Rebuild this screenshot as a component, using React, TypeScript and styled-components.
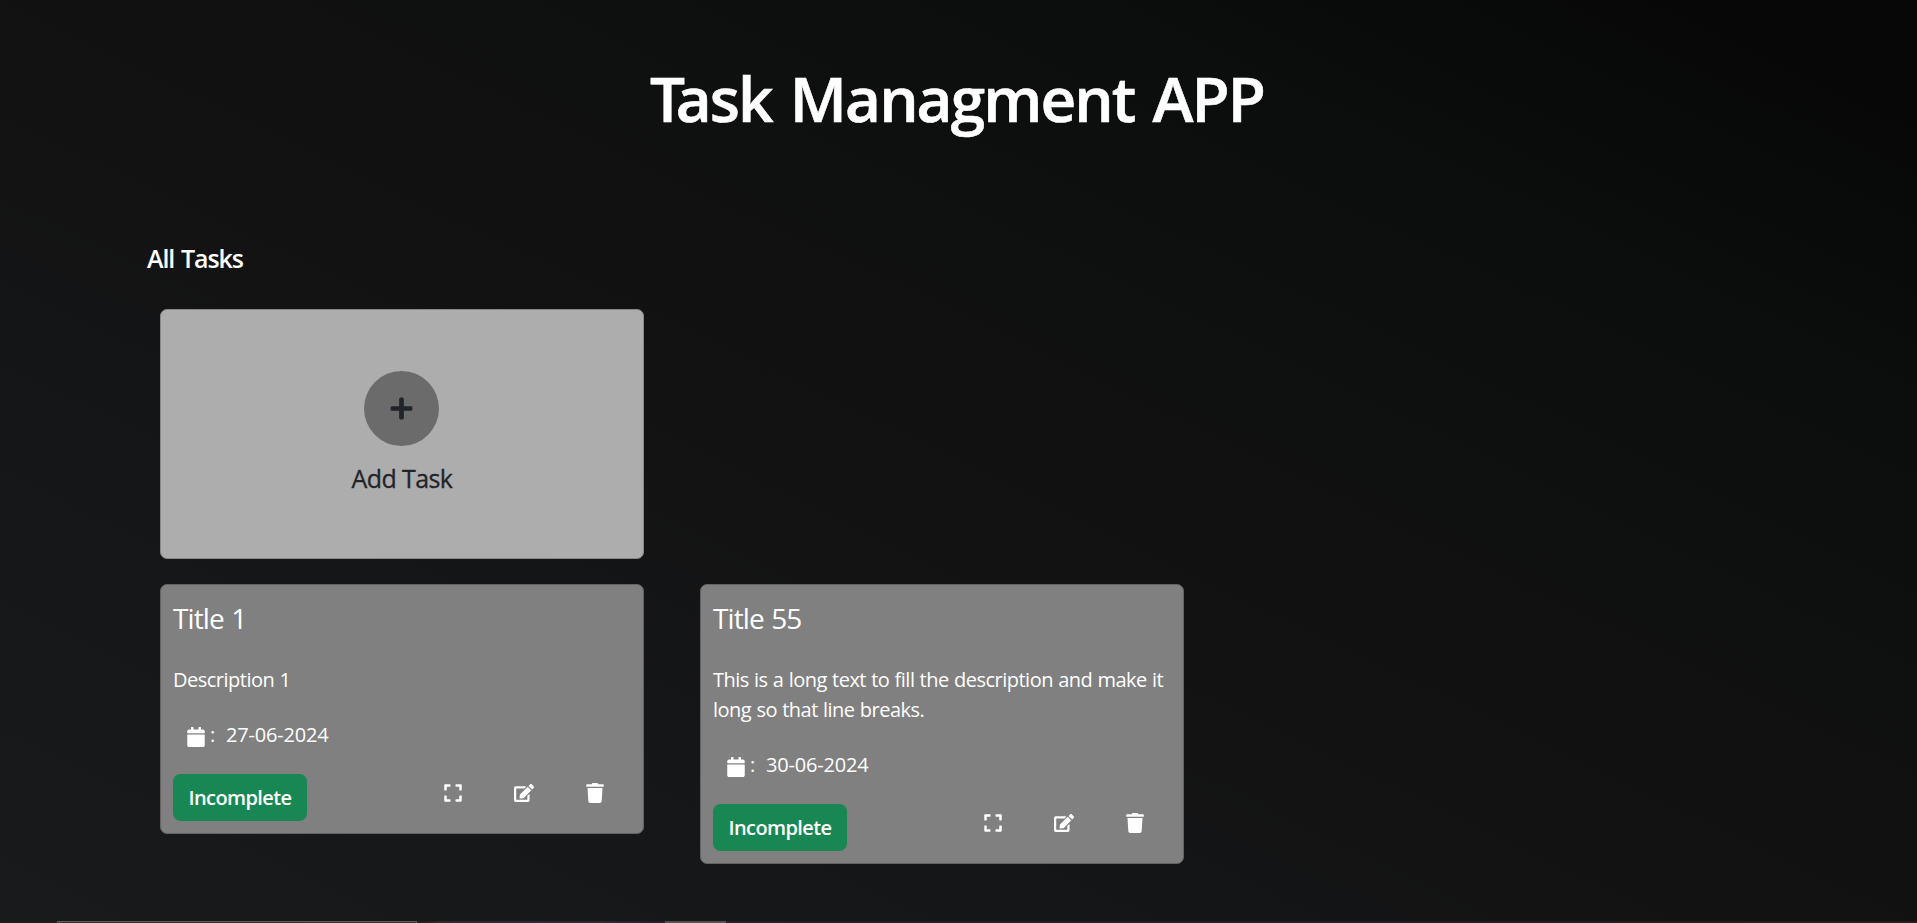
import React from "react";
import styled, { createGlobalStyle } from "styled-components";
import { FaCalendar, FaEdit, FaExpand, FaPlus, FaTrash } from "react-icons/fa";

const GlobalStyle = createGlobalStyle`
  *, *::before, *::after { box-sizing: border-box; }
  body {
    margin: 0;
    overflow: hidden;
    font-family: "Open Sans", "Noto Sans", sans-serif;
    font-size: 20px;
    line-height: 30px;
    color: #fff;
  }
`;

const Page = styled.div`
  display: flex;
  flex-direction: column;
  height: 923px;
  background: linear-gradient(to top right, #191a1c 0%, #151618 28%, #121212 46%, #111111 54%, #0b0e0d 78%, #070707 94%, #070707 100%);
`;

const Header = styled.header`
  padding: 53px 3px 0 0;
  height: 239px;
  text-align: center;
`;

const AppTitle = styled.h1`
  margin: 0;
  font-size: 62px;
  line-height: 90px;
  font-weight: 600;
  letter-spacing: -1.9px;
  word-spacing: 4px;
  -webkit-text-stroke: 0.6px currentColor;
`;

/* Pulls the following lowercase letter under the arm of a capital T. */
const Kern = styled.span`
  letter-spacing: -0.15em;
`;

const Main = styled.main`
  flex: 1;
  width: 1623px;
  margin: 0 auto;
`;

const SectionTitle = styled.h2`
  margin: 0 0 32px;
  font-size: 25px;
  line-height: 38px;
  font-weight: 600;
  letter-spacing: -1.1px;
  word-spacing: 1.5px;
`;

const Grid = styled.div`
  display: grid;
  grid-template-columns: repeat(3, 540px);
  align-items: start;
  row-gap: 25px;
  padding-left: 13px;
`;

const Card = styled.article`
  width: 484px;
  min-height: 250px;
  border: 1px solid #636363;
  border-radius: 7px;
  background: #808080;
  padding: 12px;
`;

const AddCard = styled.button`
  grid-column: 1 / -1;
  display: flex;
  flex-direction: column;
  align-items: center;
  justify-content: center;
  width: 484px;
  height: 250px;
  padding: 0 1px 5px 0;
  border: 1px solid #888;
  border-radius: 7px;
  background: #adadad;
  color: #212529;
  font: 500 25px/30px "Open Sans", "Noto Sans", sans-serif;
`;

const Circle = styled.span`
  display: grid;
  place-items: center;
  width: 75px;
  height: 75px;
  margin-bottom: 17px;
  border-radius: 50%;
  background: #6b6b6b;
`;

const AddLabel = styled.span`
  padding-left: 1px;
  letter-spacing: -0.6px;
  -webkit-text-stroke: 0.3px currentColor;
`;

const TaskTitle = styled.h3`
  margin: 4px 0 30px;
  font-size: 28px;
  line-height: 34px;
  font-weight: 400;
  letter-spacing: -0.9px;
  word-spacing: 1px;
`;

const Description = styled.p`
  margin: 0 0 25px;
  letter-spacing: -0.5px;
  word-spacing: 0.5px;
`;

const DateRow = styled.div`
  display: flex;
  align-items: center;
  height: 30px;
  padding-left: 13px;
  margin-bottom: 24px;
  letter-spacing: -0.2px;
  svg { margin: 4px 4px 0 0; }
`;

const DateText = styled.span`
  margin-left: 11px;
`;

const Footer = styled.div`
  display: flex;
  align-items: flex-start;
  justify-content: space-between;
`;

const Status = styled.span`
  display: grid;
  place-items: center;
  width: 134px;
  height: 47px;
  border-radius: 7.5px;
  background: #198754;
  font-weight: 600;
  letter-spacing: -0.6px;
`;

const Actions = styled.div`
  display: flex;
  gap: 51px;
  padding: 9px 26px 0 0;
`;

const BottomEdge = styled.div`
  display: flex;
  height: 2px;
  padding-left: 57px;
  background: linear-gradient(to right, #241b1f 0, #241b1f 417px, #33252a 440px, #2f2838 590px, #241f24 665px, #241d20 100%);
`;

const EdgeField = styled.div`
  width: 360px;
  margin-right: 248px;
  border: 1px solid #5c5c5c;
  border-bottom: 0;
  background: #303030;
`;

const EdgeTab = styled.div`
  width: 61px;
  background: #505050;
`;

const tasks = [
  { title: "Title 1", description: "Description 1", date: "27-06-2024" },
  {
    title: "Title 55",
    description: "This is a long text to fill the description and make it long so that line breaks.",
    date: "30-06-2024",
  },
];

export default function App() {
  return (
    <Page>
      <GlobalStyle />
      <Header>
        <AppTitle><Kern>T</Kern>ask Managment APP</AppTitle>
      </Header>
      <Main>
        <SectionTitle>All Tasks</SectionTitle>
        <Grid>
          <AddCard>
            <Circle><FaPlus size={25} /></Circle>
            <AddLabel>Add Task</AddLabel>
          </AddCard>
          {tasks.map((task) => (
            <Card key={task.title}>
              <TaskTitle>{task.title}</TaskTitle>
              <Description>{task.description}</Description>
              <DateRow>
                <FaCalendar />:<DateText>{task.date}</DateText>
              </DateRow>
              <Footer>
                <Status>Incomplete</Status>
                <Actions>
                  <FaExpand />
                  <FaEdit />
                  <FaTrash />
                </Actions>
              </Footer>
            </Card>
          ))}
        </Grid>
      </Main>
      <BottomEdge>
        <EdgeField />
        <EdgeTab />
      </BottomEdge>
    </Page>
  );
}
